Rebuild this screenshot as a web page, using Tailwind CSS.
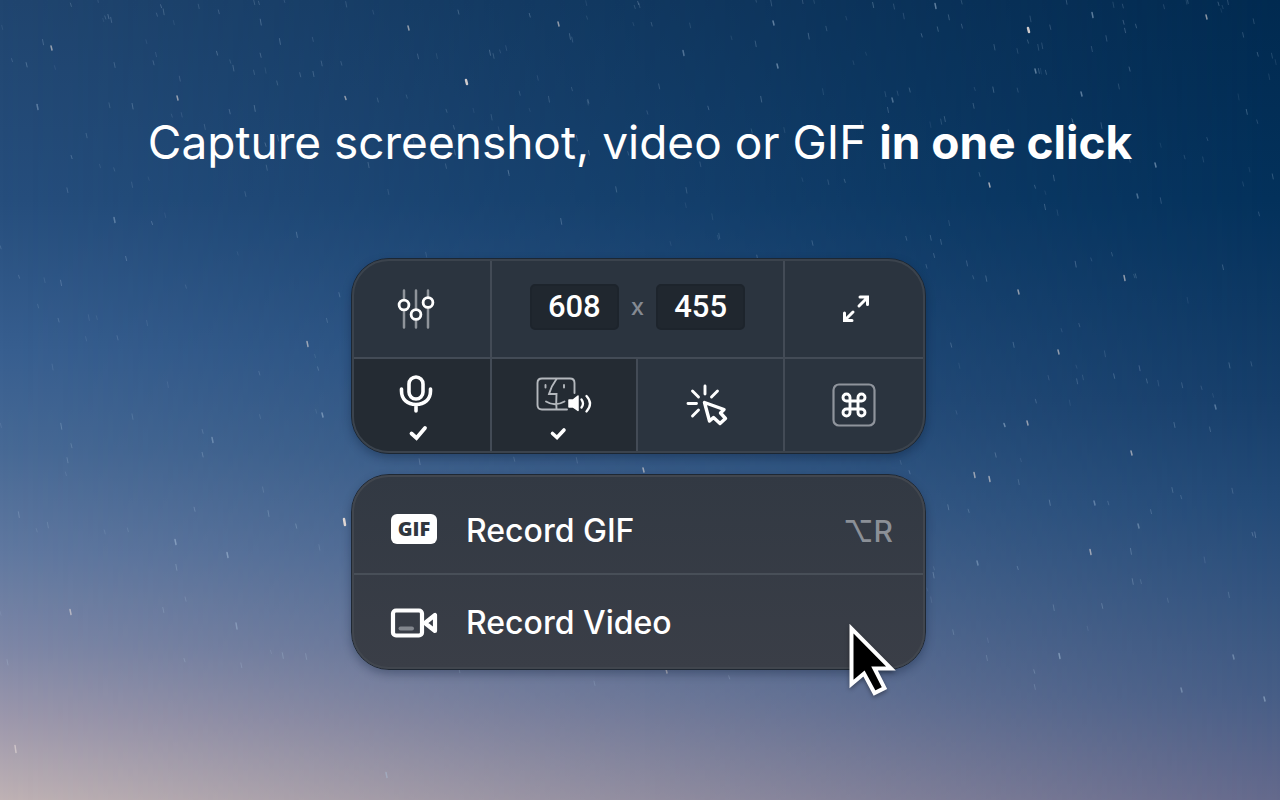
<!DOCTYPE html>
<html lang="en">
<head>
    <meta charset="UTF-8">
    <meta name="viewport" content="width=device-width, initial-scale=1.0">
    <title>Capture in one click</title>
    <script src="https://cdn.jsdelivr.net/npm/@tailwindcss/browser@4"></script>
</head>
<body class="relative min-h-screen overflow-x-hidden bg-[#2c5186] font-['Inter',sans-serif] text-white">
    <!-- Night sky: lighter on the left, the darker right side is masked over it -->
    <div class="absolute inset-0 bg-[linear-gradient(180deg,#20456f_0%,#264e7d_25%,#385f90_44%,#476995_56%,#6078a0_69%,#7e87a6_81%,#9d98ac_90%,#bfb2b4_100%)]"></div>
    <div class="absolute inset-0 bg-[linear-gradient(180deg,#012a50_0%,#03315b_25%,#163e6a_50%,#234a77_63%,#34547f_75%,#465d86_87%,#64698c_100%)] [mask-image:linear-gradient(90deg,transparent,black)]"></div>
    <svg id="stars" class="absolute inset-0 h-full w-full" viewBox="0 0 1280 800" preserveAspectRatio="xMidYMid slice" stroke-linecap="round" aria-hidden="true"></svg>

    <main class="relative flex flex-col items-center pt-[112px] pb-10">
        <h1 class="text-center text-[46px] leading-[60px] font-normal">Capture screenshot, video or GIF <b class="font-bold">in one click</b></h1>

        <div class="mt-[86px] flex w-full max-w-[578px] flex-col gap-5 pr-[3px]">
            <!-- Capture controls -->
            <section class="rounded-[38px] border border-[#1c2733] bg-[#2b343f] shadow-[0_4px_10px_rgba(0,15,40,0.3)]">
                <div class="grid grid-cols-[138px_146px_147px_1fr] grid-rows-[98px_92px] overflow-hidden rounded-[37px] border-2 border-[#3b434d]">
                    <button class="flex items-center justify-center border-r-2 border-b-2 border-[#434b56] pr-3" aria-label="Settings">
                        <svg class="h-10 w-10" viewBox="0 0 40 40" fill="none">
                            <path d="M8 1.500V38.500M20 1.500V38.500M32 1.500V38.500" stroke="#8f949b" stroke-width="2.500" stroke-linecap="round"/>
                            <g fill="#2b343f" stroke="#fff" stroke-width="2.800">
                                <circle cx="8" cy="16" r="4.900"/>
                                <circle cx="20" cy="25.500" r="4.900"/>
                                <circle cx="32" cy="13.500" r="4.900"/>
                            </g>
                        </svg>
                    </button>
                    <div class="col-span-2 flex items-center justify-center gap-3 border-r-2 border-b-2 border-[#434b56] pb-1">
                        <input type="text" value="608" aria-label="Width" class="h-[46px] w-[89px] rounded-[5px] border-2 border-[#1d242c] bg-[#20272f] text-center font-['Roboto',sans-serif] text-[31px] font-medium">
                        <span class="text-[24px] font-medium text-[#858a92]">x</span>
                        <input type="text" value="455" aria-label="Height" class="h-[46px] w-[89px] rounded-[5px] border-2 border-[#1d242c] bg-[#20272f] text-center font-['Roboto',sans-serif] text-[31px] font-medium">
                    </div>
                    <button class="flex items-center justify-center border-b-2 border-[#434b56] pl-1" aria-label="Full screen">
                        <svg class="h-7 w-7" viewBox="0 0 28 28" fill="none" stroke="#fff" stroke-width="3">
                            <path d="M17 11L24.500 3.500M18 2H25.500V9.500M11 17L3.500 24.500M2.500 18V25.500H10" stroke-linecap="round"/>
                        </svg>
                    </button>
                    <button class="flex flex-col items-center justify-center gap-3 border-r-2 border-[#434b56] bg-[#242b33] pt-1 pr-3" aria-label="Microphone" aria-pressed="true">
                        <svg class="h-10 w-10" viewBox="0 0 40 40" fill="none" stroke="#fff" stroke-width="3.600" stroke-linecap="round">
                            <rect x="13" y="4" width="14" height="22" rx="7"/>
                            <path d="M5.500 16V18C5.500 26.500 11.500 31.500 20 31.500S34.500 26.500 34.500 18V16M20 32V38"/>
                        </svg>
                        <svg class="ml-1 h-4 w-5" viewBox="0 0 20 16" fill="none" stroke="#fff" stroke-width="3.800" stroke-linecap="round"><path d="M3.500 8.500L8.500 13L17 3"/></svg>
                    </button>
                    <button class="flex flex-col items-center justify-center gap-3 border-r-2 border-[#434b56] bg-[#242b33] pt-1" aria-label="System audio" aria-pressed="true">
                        <svg class="h-10 w-14" viewBox="0 0 56 40" fill="none">
                            <g stroke="#b4b8bd" stroke-width="1.900" stroke-linecap="round">
                                <path d="M38.500 20V10Q38.500 5.500 34 5.500H6Q1.500 5.500 1.500 10V32Q1.500 36.500 6 36.500H31"/>
                                <path d="M20.500 6Q15 13.500 13 21H20.500Q20 29.500 20.500 36M9.500 12V14.500M28 12V14.500M10 28.500Q19 34 28.500 28.500"/>
                            </g>
                            <path d="M33 27H37L42 23V37.500L37 34H33Z" fill="#fff" stroke="#fff" stroke-width="1.500" stroke-linejoin="round"/>
                            <path d="M45.500 26.500Q48.500 30.500 45.500 34.500M50.500 23Q57.500 30.500 50.500 38.500" stroke="#fff" stroke-width="2.300" stroke-linecap="round"/>
                        </svg>
                        <svg class="mr-3 h-4 w-5" viewBox="0 0 20 16" fill="none" stroke="#fff" stroke-width="3.600" stroke-linecap="round"><path d="M4.500 8.500L9 12.500L16 5"/></svg>
                    </button>
                    <button class="flex items-center justify-center border-r-2 border-[#434b56] pr-2" aria-label="Show clicks">
                        <svg class="h-11 w-11" viewBox="0 0 44 44" fill="none" stroke="#fff" stroke-linecap="round" stroke-linejoin="round">
                            <path d="M20 3V11M7.500 8L13.500 14M32.500 8L26.500 14M3 20.500H11.500M7.500 33L13.500 27" stroke-width="2.900"/>
                            <path d="M19.500 19.500L24.500 38L28.500 34.500L35 40.500L40.500 35.500L35.500 30L39 26.500Z" stroke-width="3.400"/>
                        </svg>
                    </button>
                    <button class="flex items-center justify-center" aria-label="Show keystrokes">
                        <svg class="h-11 w-11" viewBox="0 0 44 44" fill="none">
                            <rect x="1.500" y="1.500" width="41" height="41" rx="5.500" stroke="#8f949c" stroke-width="2.200"/>
                            <path d="M18 18V14.500A3.500 3.500 0 1 0 14.500 18H29.500A3.500 3.500 0 1 0 26 14.500V29.500A3.500 3.500 0 1 0 29.500 26H14.500A3.500 3.500 0 1 0 18 29.500Z" stroke="#fff" stroke-width="2.900"/>
                        </svg>
                    </button>
                </div>
            </section>

            <!-- Record menu -->
            <section class="relative rounded-[38px] border border-[#1f2833] bg-linear-to-b from-[#323943] to-[#3a3e47] shadow-[0_4px_10px_rgba(0,15,40,0.3)]">
                <div class="overflow-hidden rounded-[37px] border-2 border-[#41464e] text-[32px] leading-10 font-medium">
                    <button class="flex h-[98px] w-full items-center border-b-2 border-[#484f58] pt-3 pr-[30px] pl-9">
                        <svg class="mb-1 h-8 w-12" viewBox="0 0 48 32">
                            <rect x="1" y="1" width="46" height="30" rx="6" fill="#fff"/>
                            <text x="24" y="23" text-anchor="middle" fill="#30373f" class="font-['Open_Sans',sans-serif] text-[20px] font-extrabold">GIF</text>
                        </svg>
                        <span class="ml-7">Record GIF</span>
                        <kbd class="ml-auto font-['Inter',sans-serif] text-[30px] font-medium text-[#8b9097]">⌥R</kbd>
                    </button>
                    <button class="flex h-[92px] w-full items-center pt-1 pr-[30px] pl-9">
                        <svg class="h-8 w-12" viewBox="0 0 48 32" fill="none">
                            <rect x="3" y="3.500" width="29" height="25" rx="3" stroke="#fff" stroke-width="4.200"/>
                            <path d="M35 16L45 8V24Z" stroke="#fff" stroke-width="4.200" stroke-linejoin="round"/>
                            <path d="M10.500 21.500H22" stroke="#82868d" stroke-width="4" stroke-linecap="round"/>
                        </svg>
                        <span class="ml-7">Record Video</span>
                    </button>
                </div>
                <svg class="absolute right-[25px] -bottom-8 h-20 w-14 drop-shadow-[0_2px_2px_rgba(0,0,0,0.35)]" viewBox="0 0 56 80" aria-hidden="true">
                    <path d="M7.500 7.500V63L20 52.500L30.500 72L40.500 67L30.500 47.500H47Z" fill="#000" stroke="#fff" stroke-width="4" stroke-linejoin="miter"/>
                </svg>
            </section>
        </div>
    </main>

    <script>
        // bright stars: x, y, trail length, opacity
        const bright = [
            [466, 82, 4, 0.9], [1028, 30, 4, 0.9], [989, 185, 4, 0.7], [344, 522, 6, 1], [558, 24, 4, 0.6],
            [408, 28, 4, 0.6], [51, 48, 4, 0.6], [177, 98, 4, 0.6], [345, 98, 3, 0.6], [114, 220, 5, 0.4],
            [307, 344, 5, 0.6], [1018, 292, 4, 0.6], [1124, 278, 5, 0.6], [1058, 352, 4, 0.6], [1131, 453, 4, 0.6],
            [974, 475, 5, 0.6], [989, 479, 5, 0.6], [1090, 552, 5, 0.6], [175, 542, 5, 0.5], [227, 555, 5, 0.5],
            [70, 612, 5, 0.6], [236, 626, 6, 0.4], [15, 749, 7, 0.6], [666, 671, 4, 0.6], [643, 470, 4, 0.6],
            [683, 53, 5, 0.4], [935, 6, 5, 0.5], [1206, 17, 4, 0.6], [1092, 15, 5, 0.5], [37, 107, 5, 0.4],
            [386, 775, 5, 0.4], [1059, 656, 5, 0.5], [212, 440, 5, 0.4], [322, 415, 4, 0.5], [1181, 690, 4, 0.4],
            [773, 23, 4, 0.5], [777, 66, 4, 0.5], [1035, 71, 4, 0.5], [1081, 94, 4, 0.5], [892, 100, 4, 0.4],
            [1155, 165, 4, 0.5], [1137, 196, 4, 0.4], [1027, 423, 4, 0.6], [1004, 425, 3, 0.5], [1215, 407, 4, 0.4],
            [1233, 657, 4, 0.4], [1264, 699, 4, 0.5], [977, 563, 4, 0.4], [1094, 503, 4, 0.4], [1138, 526, 4, 0.4]
        ];
        const svg = document.getElementById("stars");

        function addStar(x, y, len, alpha, width) {
            const line = document.createElementNS("http://www.w3.org/2000/svg", "line");
            line.setAttribute("x1", x);
            line.setAttribute("y1", y - len / 2);
            line.setAttribute("x2", x + 1);
            line.setAttribute("y2", y + len / 2);
            line.setAttribute("stroke", alpha > 0.5 ? "#e6dcd8" : "#b0c8e0");
            line.setAttribute("stroke-opacity", alpha);
            line.setAttribute("stroke-width", width);
            svg.appendChild(line);
        }

        // same faint stars on every load
        let seed = 7;
        function rand() {
            seed = (seed * 16807) % 2147483647;
            return seed / 2147483647;
        }

        for (let i = 0; i < 420; i++) {
            addStar(rand() * 1280, Math.pow(rand(), 1.6) * 700, 3 + rand() * 3, 0.1 + rand() * 0.2, 1);
        }
        bright.forEach(s => addStar(s[0], s[1], s[2], s[3], s[3] > 0.8 ? 2.5 : 1.5));
    </script>
</body>
</html>
